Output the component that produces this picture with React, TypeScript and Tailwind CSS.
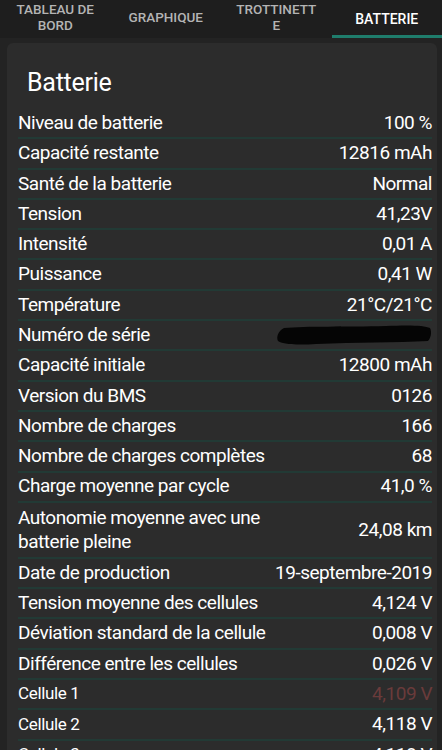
import React from "react";

interface Row {
    label: string;
    value?: string;
    small?: boolean;
    warn?: boolean;
    hidden?: boolean;
    tall?: boolean;
}

const rows: Row[] = [
    { label: "Niveau de batterie", value: "100 %" },
    { label: "Capacité restante", value: "12816 mAh" },
    { label: "Santé de la batterie", value: "Normal" },
    { label: "Tension", value: "41,23V" },
    { label: "Intensité", value: "0,01 A" },
    { label: "Puissance", value: "0,41 W" },
    { label: "Température", value: "21°C/21°C" },
    { label: "Numéro de série", hidden: true },
    { label: "Capacité initiale", value: "12800 mAh" },
    { label: "Version du BMS", value: "0126" },
    { label: "Nombre de charges", value: "166" },
    { label: "Nombre de charges complètes", value: "68" },
    { label: "Charge moyenne par cycle", value: "41,0 %" },
    { label: "Autonomie moyenne avec une batterie pleine", value: "24,08 km", tall: true },
    { label: "Date de production", value: "19-septembre-2019" },
    { label: "Tension moyenne des cellules", value: "4,124 V" },
    { label: "Déviation standard de la cellule", value: "0,008 V" },
    { label: "Différence entre les cellules", value: "0,026 V" },
    { label: "Cellule 1", value: "4,109 V", small: true, warn: true },
    { label: "Cellule 2", value: "4,118 V", small: true },
    { label: "Cellule 3", value: "4,118 V", small: true },
];

const tabs = [
    ["TABLEAU DE", "BORD"],
    ["GRAPHIQUE"],
    ["TROTTINETT", "E"],
    ["BATTERIE"],
];

function Redacted() {
    return (
        <svg width="156" height="24" viewBox="0 0 156 24" className="shrink-0">
            <path
                d="M8 5 C30 3 70 4 110 3 C130 2 148 2 154 5 C156 9 155 15 152 18 C120 20 80 19 40 21 C25 22 8 22 2 18 C0 14 2 8 8 5 Z"
                fill="#050505"
            />
        </svg>
    );
}

export default function App() {
    return (
        <div className="w-[442px] h-[750px] overflow-hidden bg-[#232323] text-white" style={{ fontFamily: "Roboto, 'Noto Sans', sans-serif" }}>
            {/* tab bar */}
            <div className="flex h-[38px] bg-[#1e1e1e]">
                {tabs.map((t, i) => (
                    <div
                        key={i}
                        className={
                            i === 3
                                ? "flex-1 flex flex-col items-center justify-center border-b-[3px] border-[#1f7d6c] pt-[3px] text-white text-[14px] font-medium leading-[16px]"
                                : "flex-1 flex flex-col items-center justify-center pb-[4px] text-[#b4b4b4] text-[13.5px] font-medium leading-[16px]"
                        }
                    >
                        {t.map((line, k) => (
                            <span key={k}>{line}</span>
                        ))}
                    </div>
                ))}
            </div>

            {/* card */}
            <div className="mt-[5px] ml-[7px] mr-[5px] rounded-[6px] bg-[#2c2c2c] pl-[11px] pr-[5px] pt-[25px]">
                <div className="pl-[9px] text-[25px] leading-[30px] tracking-[-0.01em] mb-[11px]">Batterie</div>
                {rows.map((r, i) => (
                    <div
                        key={i}
                        className={
                            r.tall
                                ? "flex items-center justify-between gap-2 border-t-2 border-[#223a35] min-h-[55px] py-[3px]"
                                : "flex items-center justify-between gap-2 border-t-2 border-[#223a35] h-[30.3px]"
                        }
                        style={i === 0 ? { borderTopWidth: 0, height: "28.3px" } : undefined}
                    >
                        <span
                            className={
                                r.small
                                    ? "text-[17px] tracking-[-0.02em] whitespace-nowrap"
                                    : r.tall
                                    ? "text-[19px] leading-[24px] tracking-[-0.025em] max-w-[250px]"
                                    : "text-[19px] tracking-[-0.025em] whitespace-nowrap"
                            }
                        >
                            {r.label}
                        </span>
                        {r.hidden ? (
                            <Redacted />
                        ) : (
                            <span
                                className={
                                    r.warn
                                        ? "shrink-0 whitespace-nowrap text-[19px] tracking-[-0.025em] text-[#6a3b3b]"
                                        : "shrink-0 whitespace-nowrap text-[19px] tracking-[-0.025em]"
                                }
                            >
                                {r.value}
                            </span>
                        )}
                    </div>
                ))}
            </div>
        </div>
    );
}
